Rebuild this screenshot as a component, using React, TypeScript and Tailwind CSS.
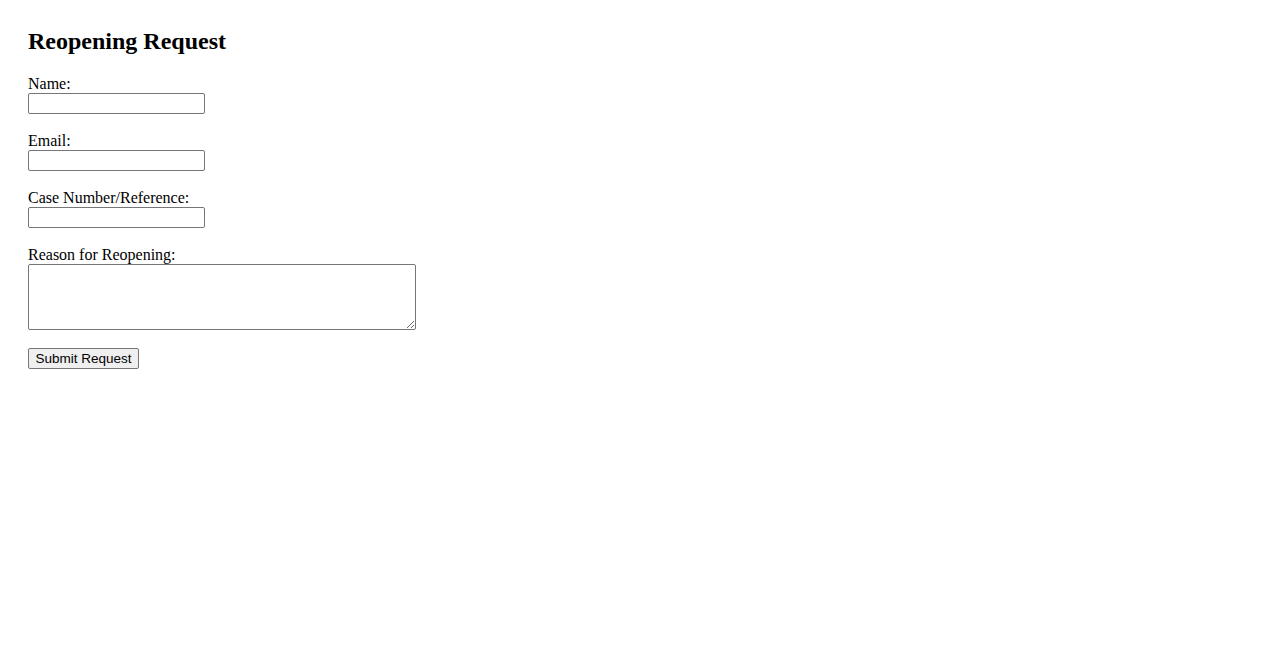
export default function App() {
  const fields = ['Name:', 'Email:', 'Case Number/Reference:'];

  return (
    <div className="min-h-screen bg-white text-black" style={{ fontFamily: '"Liberation Serif", "Times New Roman", serif' }}>
      <div className="pl-[28px] pt-[27px]">
        <h2 className="text-[24px] leading-[28px] font-bold">Reopening Request</h2>
        <form className="mt-[20px] flex flex-col items-start">
          {fields.map((label) => (
            <div key={label} className="mb-[18px] flex flex-col items-start">
              <label className="text-[16px] leading-[18px]">{label}</label>
              <input
                type="text"
                className="w-[177px] h-[21px] border border-[#767676] rounded-[2px] px-[2px] text-[13.33px] bg-white"
              />
            </div>
          ))}
          <div className="mb-[18px] flex flex-col items-start">
            <label className="text-[16px] leading-[18px]">Reason for Reopening:</label>
            <textarea className="w-[388px] h-[66px] border border-[#767676] rounded-[2px] p-[2px] text-[13.33px] bg-white" />
          </div>
          <button
            type="submit"
            className="w-[111px] h-[21px] border border-[#767676] rounded-[2px] bg-[#efefef] text-[13.5px] leading-[17px] text-center"
            style={{ fontFamily: '"Liberation Sans", Arial, sans-serif' }}
          >
            Submit Request
          </button>
        </form>
      </div>
    </div>
  );
}
